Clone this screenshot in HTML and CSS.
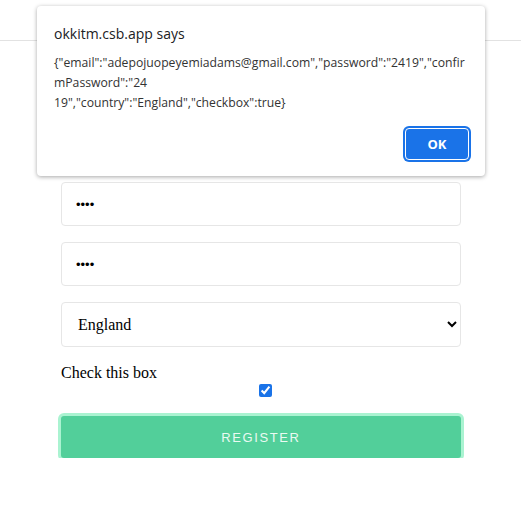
FILE: index.html
```html
<!DOCTYPE html>
<html lang="en">
<head>
    <meta charset="UTF-8">
    <meta name="viewport" content="width=device-width, initial-scale=1.0">
    <title>Register</title>
    <link rel="stylesheet" href="styles.css">
</head>
<body>
    <header class="top-bar"></header>

    <main>
        <form class="register-form">
            <input type="email" class="field" value="adepojuopeyemiadams@gmail.com">
            <input type="password" class="field" value="2419">
            <input type="password" class="field" value="2419">
            <select class="field select-field">
                <option>England</option>
            </select>
            <label class="check-label">Check this box</label>
            <input type="checkbox" class="check" checked>
            <button type="button" class="register-btn">REGISTER</button>
        </form>
    </main>

    <div class="alert-box">
        <div class="alert-title">okkitm.csb.app says</div>
        <div class="alert-message">
            <span>{"email":"adepojuopeyemiadams@gmail.com","password":"2419","confir</span>
            <span>mPassword":"24</span>
            <span>19","country":"England","checkbox":true}</span>
        </div>
        <div class="alert-actions">
            <button type="button" class="ok-btn">OK</button>
        </div>
    </div>
</body>
</html>
```

FILE: styles.css
```css
body {
    margin: 0;
    padding: 0;
    background: #fff;
    font-family: "Liberation Serif", serif;
}

.top-bar {
    height: 40px;
    border-bottom: 1px solid #e2e2e2;
}

main {
    padding-left: 61px;
}

.register-form {
    width: 400px;
    display: flex;
    flex-direction: column;
    padding-top: 81px;
}

.field {
    box-sizing: border-box;
    width: 400px;
    height: 44px;
    margin-bottom: 16px;
    padding: 0 14px;
    border: 1px solid #e6e6e6;
    border-radius: 4px;
    background: #fff;
    font-size: 13px;
    color: #000;
    outline: none;
}

.select-field {
    height: 45px;
    margin-bottom: 16px;
    font-family: "Liberation Serif", serif;
    font-size: 16px;
    padding-left: 12px;
}

.check-label {
    font-size: 16px;
    line-height: 19px;
    color: #000;
}

.check {
    align-self: center;
    width: 13px;
    height: 13px;
    margin: 2px 0 0 8px;
    accent-color: #1a73e8;
}

.register-btn {
    margin-top: 19px;
    height: 42px;
    width: 400px;
    border: none;
    border-radius: 3px;
    background: #52cf9a;
    box-shadow: 0 0 0 3px #aaf3d1;
    color: #eafaf2;
    font-family: "Liberation Sans", Arial, sans-serif;
    font-size: 13px;
    letter-spacing: 1.6px;
    cursor: pointer;
}

.alert-box {
    position: absolute;
    left: 37px;
    top: 6px;
    box-sizing: border-box;
    width: 448px;
    height: 170px;
    padding: 18px 16px 0 17px;
    background: #fff;
    border-radius: 4px;
    box-shadow: 0 1px 4px rgba(0, 0, 0, 0.35);
    font-family: "Open Sans", sans-serif;
}

.alert-title {
    font-size: 14px;
    line-height: 20px;
    color: #202124;
}

.alert-message {
    margin-top: 9px;
    font-size: 12.2px;
    line-height: 20px;
    color: #333;
}

.alert-message span {
    display: block;
    white-space: nowrap;
}

.alert-actions {
    display: flex;
    justify-content: flex-end;
    margin-top: 15px;
}

.ok-btn {
    width: 64px;
    height: 32px;
    border: 1px solid #fff;
    border-radius: 4px;
    background: #1a73e8;
    box-shadow: 0 0 0 2px #1a73e8;
    color: #fff;
    font-family: "Open Sans", sans-serif;
    font-size: 13px;
    font-weight: 700;
}
```
